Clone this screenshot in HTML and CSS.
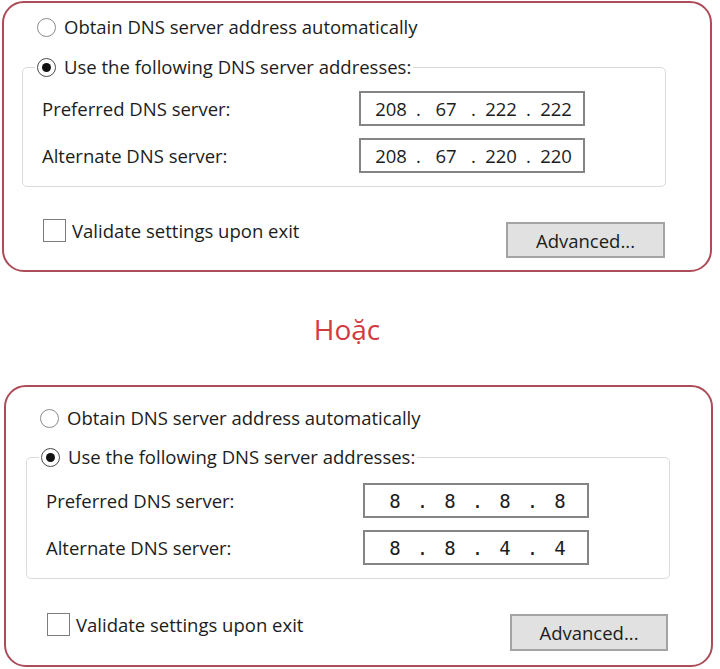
FILE: index.html
```html
<!DOCTYPE html>
<html lang="vi">
<head>
  <meta charset="UTF-8">
  <meta name="viewport" content="width=device-width, initial-scale=1.0">
  <title>Cài đặt DNS</title>
  <link rel="stylesheet" href="styles.css">
</head>
<body>
  <!-- OpenDNS -->
  <div class="panel panel-first">
    <div class="option">
      <span class="radio"></span>
      <span>Obtain DNS server address automatically</span>
    </div>
    <fieldset class="group">
      <legend>
        <div class="option">
          <span class="radio checked"></span>
          <span>Use the following DNS server addresses:</span>
        </div>
      </legend>
      <div class="field-row">
        <span class="field-label">Preferred DNS server:</span>
        <div class="ip-box">
          <span class="seg">208</span><span class="dot">.</span><span class="seg">67</span><span class="dot">.</span><span class="seg">222</span><span class="dot">.</span><span class="seg">222</span>
        </div>
      </div>
      <div class="field-row">
        <span class="field-label">Alternate DNS server:</span>
        <div class="ip-box">
          <span class="seg">208</span><span class="dot">.</span><span class="seg">67</span><span class="dot">.</span><span class="seg">220</span><span class="dot">.</span><span class="seg">220</span>
        </div>
      </div>
    </fieldset>
    <div class="footer">
      <label class="check"><span class="box"></span>Validate settings upon exit</label>
      <button class="btn">Advanced...</button>
    </div>
  </div>

  <div class="divider">Hoặc</div>

  <!-- Google DNS -->
  <div class="panel panel-second">
    <div class="option">
      <span class="radio"></span>
      <span>Obtain DNS server address automatically</span>
    </div>
    <fieldset class="group">
      <legend>
        <div class="option">
          <span class="radio checked"></span>
          <span>Use the following DNS server addresses:</span>
        </div>
      </legend>
      <div class="field-row">
        <span class="field-label">Preferred DNS server:</span>
        <div class="ip-box">
          <span class="seg">8</span><span class="dot">.</span><span class="seg">8</span><span class="dot">.</span><span class="seg">8</span><span class="dot">.</span><span class="seg">8</span>
        </div>
      </div>
      <div class="field-row">
        <span class="field-label">Alternate DNS server:</span>
        <div class="ip-box">
          <span class="seg">8</span><span class="dot">.</span><span class="seg">8</span><span class="dot">.</span><span class="seg">4</span><span class="dot">.</span><span class="seg">4</span>
        </div>
      </div>
    </fieldset>
    <div class="footer">
      <label class="check"><span class="box"></span>Validate settings upon exit</label>
      <button class="btn">Advanced...</button>
    </div>
  </div>
</body>
</html>
```

FILE: styles.css
```css
/* Generelt */
* { box-sizing: border-box; }
body {
  margin: 0;
  background-color: #fff;
  color: #1c1c1c;
  font-family: 'Open Sans', sans-serif;
  font-size: 18.5px;
}

/* Rammene rundt hver dialog */
.panel {
  border: 2px solid #ab4c58;
  border-radius: 22px;
}
.panel-first {
  width: 710px;
  margin: 1px 0 0 2px;
  padding: 12px 0;
}
.panel-second {
  width: 709px;
  margin: 0 0 0 4px;
  padding: 19px 0 14px 0;
}

/* Radioknapper */
.option {
  display: flex;
  align-items: center;
  height: 24px;
  line-height: 24px;
  white-space: nowrap;
}
.panel > .option { margin-left: 33px; }
.panel-second > .option { margin-left: 34px; }
.radio {
  display: flex;
  align-items: center;
  justify-content: center;
  flex-shrink: 0;
  width: 19px;
  height: 19px;
  margin-right: 8px;
  border: 1.5px solid #8a8a8a;
  border-radius: 50%;
  background-color: #fff;
}
.radio.checked { border-color: #4a4a4a; }
.radio.checked::after {
  content: '';
  width: 9px;
  height: 9px;
  border-radius: 50%;
  background-color: #111;
}

/* Gruppeboks */
.group {
  margin: 16px 44px 0 18px;
  padding: 12px 0 13px 0;
  border: 1px solid #dadada;
  border-radius: 5px;
}
.group legend {
  margin-left: 12px;
  padding: 0 2px;
}
.panel-second .group {
  margin: 15px 41px 0 20px;
  padding-top: 14px;
}

.field-row {
  display: flex;
  align-items: center;
  padding-left: 19px;
}
.field-row + .field-row { margin-top: 12px; }
.field-label { width: 317px; }

/* IP-feltet */
.ip-box {
  display: flex;
  align-items: center;
  width: 226px;
  height: 35px;
  padding-left: 8.5px;
  border: 2px solid #858585;
  background-color: #fff;
}
.seg {
  width: 43px;
  text-align: center;
}
.dot {
  width: 12px;
  text-align: center;
}
.panel-second .ip-box {
  font-family: 'DejaVu Sans Mono', monospace;
  font-size: 19px;
}

/* Bunnlinje */
.footer {
  display: flex;
  justify-content: space-between;
  align-items: flex-start;
  margin: 32px 44px 0 18px;
  padding: 0 1px 0 21px;
}
.panel-second .footer {
  margin: 34px 41px 0 20px;
  padding-right: 2px;
}
.check {
  display: flex;
  align-items: center;
  height: 23px;
  white-space: nowrap;
}
.box {
  width: 23px;
  height: 23px;
  margin-right: 6px;
  border: 1.5px solid #7d7d7d;
  background-color: #fff;
}
.btn {
  width: 159px;
  height: 36px;
  margin-top: 3px;
  padding: 0;
  font: inherit;
  color: inherit;
  background-color: #e1e1e1;
  border: 2px solid #a3a3a3;
}
.panel-second .btn {
  width: 158px;
  height: 37px;
  margin-top: 1px;
}

/* Skillelinje */
.divider {
  height: 40px;
  margin: 37px 0 36px 0;
  padding-right: 26px;
  line-height: 40px;
  text-align: center;
  font-size: 28px;
  color: #d13a3f;
}
```
